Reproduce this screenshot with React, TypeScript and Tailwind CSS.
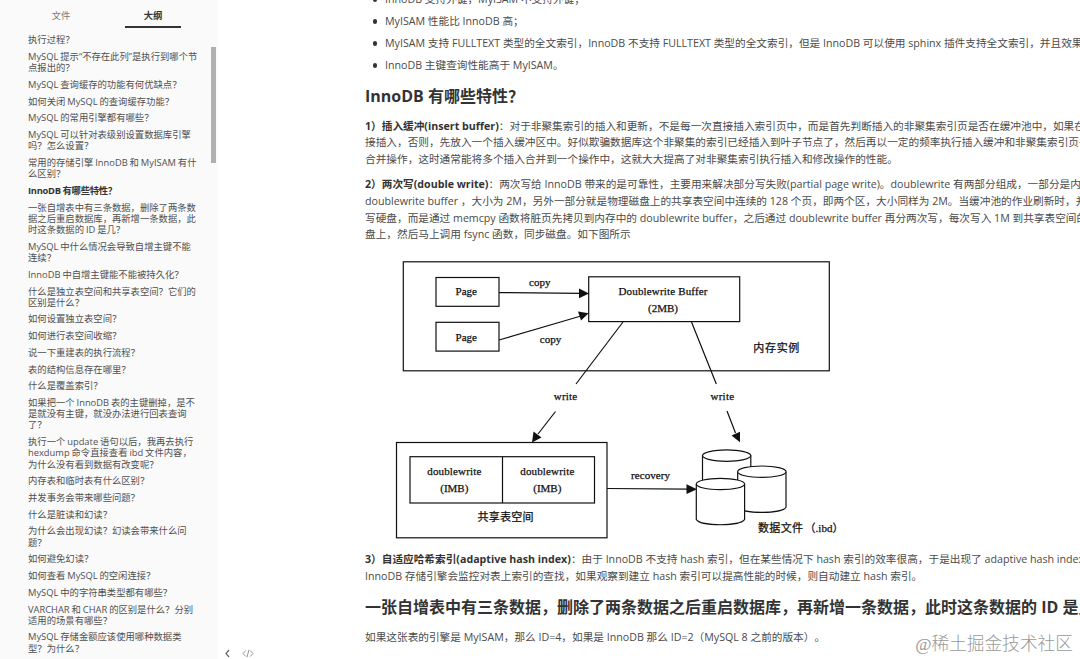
import { ReactNode } from "react"
import clsx from "clsx"

const outline: string[][] = [
  ["执行过程？"],
  ["MySQL 提示“不存在此列”是执行到哪个节", "点报出的？"],
  ["MySQL 查询缓存的功能有何优缺点？"],
  ["如何关闭 MySQL 的查询缓存功能？"],
  ["MySQL 的常用引擎都有哪些？"],
  ["MySQL 可以针对表级别设置数据库引擎", "吗？怎么设置？"],
  ["常用的存储引擎 InnoDB 和 MyISAM 有什", "么区别？"],
  ["InnoDB 有哪些特性？"],
  ["一张自增表中有三条数据，删除了两条数", "据之后重启数据库，再新增一条数据，此", "时这条数据的 ID 是几？"],
  ["MySQL 中什么情况会导致自增主键不能", "连续？"],
  ["InnoDB 中自增主键能不能被持久化？"],
  ["什么是独立表空间和共享表空间？它们的", "区别是什么？"],
  ["如何设置独立表空间？"],
  ["如何进行表空间收缩？"],
  ["说一下重建表的执行流程？"],
  ["表的结构信息存在哪里？"],
  ["什么是覆盖索引？"],
  ["如果把一个 InnoDB 表的主键删掉，是不", "是就没有主键，就没办法进行回表查询", "了？"],
  ["执行一个 update 语句以后，我再去执行", "hexdump 命令直接查看 ibd 文件内容，", "为什么没有看到数据有改变呢？"],
  ["内存表和临时表有什么区别？"],
  ["并发事务会带来哪些问题？"],
  ["什么是脏读和幻读？"],
  ["为什么会出现幻读？幻读会带来什么问", "题？"],
  ["如何避免幻读？"],
  ["如何查看 MySQL 的空闲连接？"],
  ["MySQL 中的字符串类型都有哪些？"],
  ["VARCHAR 和 CHAR 的区别是什么？分别", "适用的场景有哪些？"],
  ["MySQL 存储金额应该使用哪种数据类", "型？为什么？"],
]

const ACTIVE = 7

const bullets = [
  "InnoDB 支持外键，MyISAM 不支持外键；",
  "MyISAM 性能比 InnoDB 高；",
  "MyISAM 支持 FULLTEXT 类型的全文索引，InnoDB 不支持 FULLTEXT 类型的全文索引，但是 InnoDB 可以使用 sphinx 插件支持全文索引，并且效果更好；",
  "InnoDB 主键查询性能高于 MyISAM。",
]

function Sidebar() {
  return (
    <aside className="flex h-full w-[218px] shrink-0 flex-col overflow-hidden bg-[#fafafa] text-[9.33px] text-[#505050]">
      <div className="flex h-[28px] shrink-0 pl-[33px]">
        <div className="w-[56px] pt-[9px] text-center leading-[14px] text-[#777]">文件</div>
        <div className="ml-[36px] w-[56px] border-b-2 border-[#333] pt-[9px] text-center font-bold leading-[14px] text-[#333]">
          大纲
        </div>
      </div>
      <div className="flex min-h-0 flex-1">
        <ul className="w-[211px] pl-[28px] pt-[6.4px] [word-spacing:-0.5px]">
          {outline.map((lines, i) => (
            <li
              key={i}
              className={clsx("pb-[5.52px] leading-[11.2px]", i === ACTIVE && "font-bold tracking-[-0.25px] text-[#333]")}
            >
              {lines.map((line) => (
                <span key={line} className="block">{line}</span>
              ))}
            </li>
          ))}
        </ul>
        <div className="mt-[19px] h-[116px] w-[5px] bg-[#b0b0b0]" />
      </div>
    </aside>
  )
}

function Lines({ children, className }: { children: ReactNode; className?: string }) {
  return <p className={clsx("leading-[16.7px] [&>span]:block", className)}>{children}</p>
}

function Cylinder({ x, y }: { x: number; y: number }) {
  return (
    <g transform={`translate(${x} ${y})`} fill="#fff">
      <path d="M0 0V35.5C4 42.5 44 42.5 48.3 35.5V0" />
      <ellipse cx="24.15" cy="0" rx="24.15" ry="5.7" />
    </g>
  )
}

function DoublewriteDiagram() {
  return (
    <svg
      width="460"
      height="290"
      viewBox="390 255 460 290"
      className="block"
      fill="none"
      stroke="#111"
      strokeWidth="1.2"
    >
      {/* memory instance */}
      <rect x="403.3" y="261.8" width="426" height="109" />
      <rect x="436" y="277.5" width="63" height="28.8" />
      <rect x="436" y="322.3" width="63" height="28.8" />
      <rect x="588.7" y="276.8" width="151" height="44.8" />
      <path d="M499 292.6L581 293.3M499 340L581 316" />
      <path d="M623 322L576 384M691.5 322L716.3 384" />
      <path d="M555.5 411.5L538 434M727 411L735.5 433" />

      {/* shared tablespace */}
      <rect x="396.5" y="442.5" width="210.5" height="95.3" />
      <rect x="410" y="456.7" width="184.5" height="46.3" />
      <path d="M502.5 456.7V503M607 488.5L688 489.2" />

      {/* arrow heads */}
      <g fill="#111" stroke="none">
        <path d="M589 293.4L579 288.6V298.2Z" />
        <path d="M588.7 313.3L578 311.5L581 320.5Z" />
        <path d="M532 442.5L533.5 431.5L541.5 437.5Z" />
        <path d="M740 442.3L731.5 435.5L740 431.8Z" />
        <path d="M697 489.2L686.5 484.2V494Z" />
      </g>

      <Cylinder x={702.5} y={455.6} />
      <Cylinder x={737.7} y={471.7} />
      <Cylinder x={696.3} y={484} />

      <g
        fill="#111"
        stroke="#111"
        strokeWidth="0.25"
        textAnchor="middle"
        className="font-['Liberation_Serif','Noto_Sans_CJK_SC',serif] text-[11px]"
      >
        <text x="466.3" y="295">Page</text>
        <text x="466.3" y="340.5">Page</text>
        <text x="539.7" y="285.5">copy</text>
        <text x="550.5" y="342.5">copy</text>
        <text x="663" y="294.8" textLength="89">Doublewrite Buffer</text>
        <text x="663" y="311.5">(2MB)</text>
        <text x="776.3" y="351.5" textLength="46">内存实例</text>
        <text x="565.5" y="400.3" textLength="23.5">write</text>
        <text x="722.3" y="400.3" textLength="23.5">write</text>
        <text x="454.3" y="475" textLength="54">doublewrite</text>
        <text x="454.3" y="491.7">(IMB)</text>
        <text x="547.3" y="475" textLength="54">doublewrite</text>
        <text x="547.3" y="491.7">(IMB)</text>
        <text x="505.5" y="521.3" textLength="56">共享表空间</text>
        <text x="650.5" y="479" textLength="39">recovery</text>
        <text x="780.5" y="532.3" textLength="45">数据文件</text>
        <text x="824" y="532.3">（.ibd）</text>
      </g>
    </svg>
  )
}

export default function App() {
  return (
    <div className="relative flex h-[659px] w-[1080px] overflow-hidden whitespace-nowrap bg-white font-['Open_Sans','Noto_Sans_CJK_SC',sans-serif] [text-spacing-trim:space-all]">
      <Sidebar />

      {/* collapse / source mode buttons */}
      <div className="flex w-[147px] shrink-0 items-end gap-[11px] pb-[1px] pl-[6px]">
        <svg width="7" height="9" viewBox="0 0 7 9" fill="none" stroke="#666" strokeWidth="1.2">
          <path d="M5 1L2 4.5L5 8" />
        </svg>
        <svg width="12" height="9" viewBox="0 0 12 9" fill="none" stroke="#888" strokeWidth="0.9">
          <path d="M3.8 1.5L1 4.5L3.8 7.5M8.2 1.5L11 4.5L8.2 7.5M7 0.8L5 8.2" />
        </svg>
      </div>

      <main className="flex min-w-0 flex-1 flex-col overflow-hidden text-[10.67px] text-[#4a4a4a]">
        <ul className="-mt-[9px] flex flex-col gap-[5.3px] leading-[16.7px]">
          {bullets.map((b) => (
            <li key={b} className="flex items-center">
              <span className="ml-[7.5px] mr-[8px] size-[4.5px] shrink-0 rounded-full bg-[#333]" />
              {b}
            </li>
          ))}
        </ul>

        <h2 className="mt-[10px] text-[16px] font-bold leading-[24px] text-[#333]">InnoDB 有哪些特性？</h2>

        <Lines className="mt-[10px]">
          <span>
            <b className="text-[#333]">1）插入缓冲(insert buffer)</b>：对于非聚集索引的插入和更新，不是每一次直接插入索引页中，而是首先判断插入的非聚集索引页是否在缓冲池中，如果在，则直
          </span>
          <span>接插入，否则，先放入一个插入缓冲区中。好似欺骗数据库这个非聚集的索引已经插入到叶子节点了，然后再以一定的频率执行插入缓冲和非聚集索引页子节点的</span>
          <span>合并操作，这时通常能将多个插入合并到一个操作中，这就大大提高了对非聚集索引执行插入和修改操作的性能。</span>
        </Lines>

        <Lines className="mt-[8.5px]">
          <span>
            <b className="text-[#333]">2）两次写(double write)</b>：两次写给 InnoDB 带来的是可靠性，主要用来解决部分写失败(partial page write)。doublewrite 有两部分组成，一部分是内存中的
          </span>
          <span>doublewrite buffer ，大小为 2M，另外一部分就是物理磁盘上的共享表空间中连续的 128 个页，即两个区，大小同样为 2M。当缓冲池的作业刷新时，并不直接</span>
          <span>写硬盘，而是通过 memcpy 函数将脏页先拷贝到内存中的 doublewrite buffer，之后通过 doublewrite buffer 再分两次写，每次写入 1M 到共享表空间的物理磁</span>
          <span>盘上，然后马上调用 fsync 函数，同步磁盘。如下图所示</span>
        </Lines>

        <div className="ml-[25px] mt-[12px] h-[290px] shrink-0">
          <DoublewriteDiagram />
        </div>

        <Lines className="mt-[6.3px]">
          <span>
            <b className="text-[#333]">3）自适应哈希索引(adaptive hash index)</b>：由于 InnoDB 不支持 hash 索引，但在某些情况下 hash 索引的效率很高，于是出现了 adaptive hash index 功能，
          </span>
          <span>InnoDB 存储引擎会监控对表上索引的查找，如果观察到建立 hash 索引可以提高性能的时候，则自动建立 hash 索引。</span>
        </Lines>

        <h2 className="mt-[10px] text-[16px] font-bold leading-[24px] text-[#333]">
          一张自增表中有三条数据，删除了两条数据之后重启数据库，再新增一条数据，此时这条数据的 ID 是几？
        </h2>

        <Lines className="mt-[9.7px]">
          <span>如果这张表的引擎是 MyISAM，那么 ID=4，如果是 InnoDB 那么 ID=2（MySQL 8 之前的版本）。</span>
        </Lines>
      </main>

      <div className="absolute bottom-[3px] right-[7px] font-['Liberation_Serif','Noto_Sans_CJK_SC',serif] text-[17.7px] font-light leading-[24px] text-[#999]">
        @稀土掘金技术社区
      </div>
    </div>
  )
}
